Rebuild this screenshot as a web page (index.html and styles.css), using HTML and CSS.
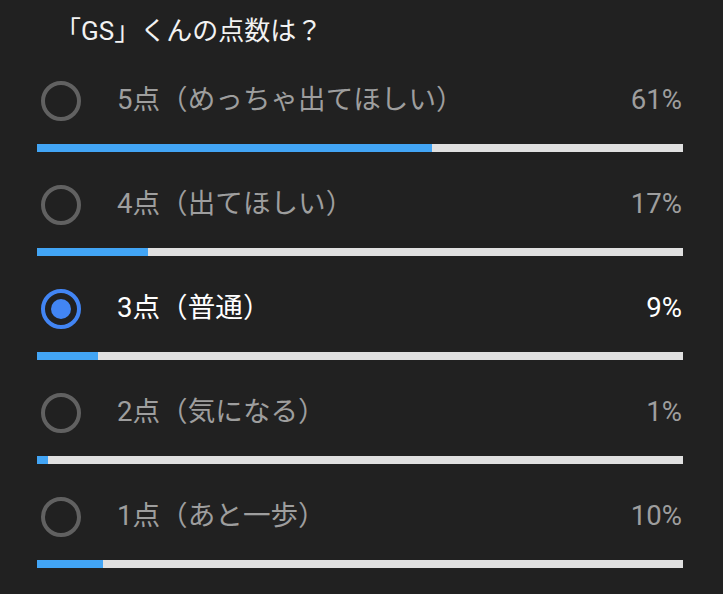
FILE: index.html
```html
<!DOCTYPE html>
<html lang="ja">
  <head>
    <meta charset="UTF-8" />
    <meta name="viewport" content="width=device-width, initial-scale=1.0" />
    <title>Poll</title>
    <link rel="stylesheet" href="styles.css">
  </head>
  <body>
    <div class="poll">
      <h1 class="question">「GS」くんの点数は？</h1>
      <div class="option">
        <div class="row">
          <span class="radio"></span>
          <span class="label">5点（めっちゃ出てほしい）</span>
          <span class="pct">61%</span>
        </div>
        <div class="bar"><div class="fill" style="width: 61.1%"></div></div>
      </div>
      <div class="option">
        <div class="row">
          <span class="radio"></span>
          <span class="label">4点（出てほしい）</span>
          <span class="pct">17%</span>
        </div>
        <div class="bar"><div class="fill" style="width: 17.2%"></div></div>
      </div>
      <div class="option selected">
        <div class="row">
          <span class="radio"></span>
          <span class="label">3点（普通）</span>
          <span class="pct">9%</span>
        </div>
        <div class="bar"><div class="fill" style="width: 9.4%"></div></div>
      </div>
      <div class="option">
        <div class="row">
          <span class="radio"></span>
          <span class="label">2点（気になる）</span>
          <span class="pct">1%</span>
        </div>
        <div class="bar"><div class="fill" style="width: 1.7%"></div></div>
      </div>
      <div class="option">
        <div class="row">
          <span class="radio"></span>
          <span class="label">1点（あと一歩）</span>
          <span class="pct">10%</span>
        </div>
        <div class="bar"><div class="fill" style="width: 10.2%"></div></div>
      </div>
    </div>
  </body>
</html>
```

FILE: styles.css
```css
* {
  box-sizing: border-box;
  margin: 0;
  padding: 0;
}
body {
  background: #212121;
  font-family: Roboto, "Noto Sans CJK JP", sans-serif;
}
.poll {
  width: 646px;
  margin-left: 37px;
}
/* question title */
.question {
  font-size: 26px;
  font-weight: 400;
  line-height: 32px;
  color: #f2f2f2;
  padding: 15px 0 1px 18px;
}
.option {
  padding-top: 29px;
}
.row {
  display: flex;
  align-items: center;
  height: 48px;
  padding-left: 4px;
  font-size: 27.6px;
  line-height: 1;
  color: #9e9e9e;
}
.radio {
  width: 40px;
  height: 40px;
  border: 4px solid #616161;
  border-radius: 50%;
  display: flex;
  align-items: center;
  justify-content: center;
}
.label {
  flex: 1;
  margin-left: 36px;
  margin-bottom: 3px;
  white-space: nowrap;
}
.pct {
  margin-right: 1px;
  margin-bottom: 3px;
}
.bar {
  margin-top: 19px;
  height: 8px;
  background: #e0e0e0;
}
.fill {
  height: 100%;
  background: #42a5f5;
}
.selected .row {
  color: #ffffff;
}
.selected .radio {
  border-color: #4285f4;
}
.selected .radio::after {
  content: "";
  width: 20px;
  height: 20px;
  border-radius: 50%;
  background: #4285f4;
}
```
